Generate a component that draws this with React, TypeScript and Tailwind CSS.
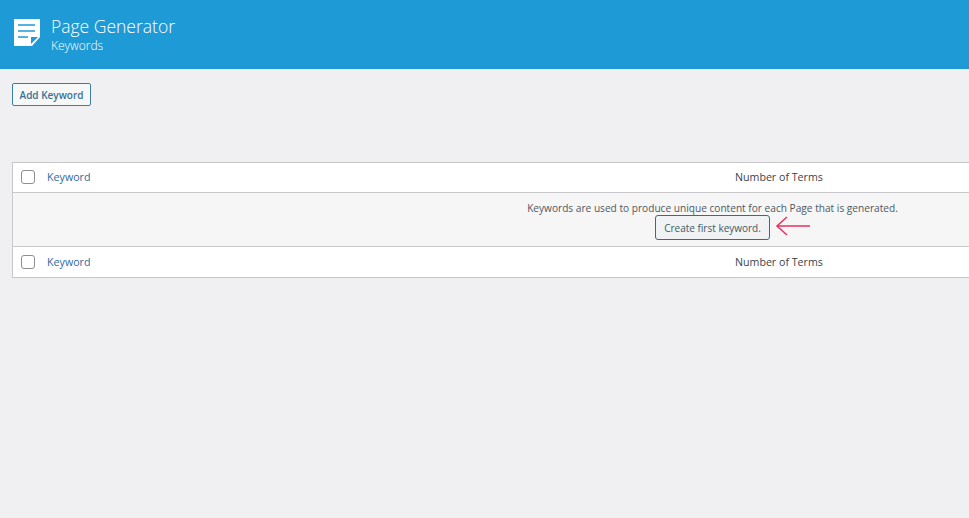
export default function App() {
  const Row = ({ border }: { border: string }) => (
    <div className={`flex items-center bg-white leading-[16px] ${border}`}>
      <div className="flex w-[34px] justify-start pl-[8px]">
        <span className="block h-[14px] w-[14px] rounded-[3px] border border-[#8c8f94] bg-white" />
      </div>
      <div className="w-[688px] text-[10.7px] text-[#2f6aa3]">Keyword</div>
      <div className="text-[10.65px] text-[#3c434a]">Number of Terms</div>
    </div>
  );
  return (
    <div className="h-[518px] w-[969px] overflow-hidden bg-[#f0f0f2] [font-family:'Open_Sans','Noto_Sans',sans-serif]">
      <header className="flex h-[69px] items-start gap-[11px] bg-[#1e9ad6] pl-[14px] pt-[19px] text-white">
        <svg width="26" height="27" viewBox="0 0 26 27" className="shrink-0">
          <path d="M0 0H26V18L18 27H0Z" fill="#fff" />
          <path d="M4 6H21M4 12H21M4 18H14" stroke="#1e9ad6" strokeWidth="1.6" />
          <path d="M17 18H24L17 25Z" fill="#1e9ad6" />
        </svg>
        <div className="-mt-[4px]">
          <div className="text-[17.5px] font-light leading-[22px]">Page Generator</div>
          <div className="mt-[2px] text-[12px] font-light leading-[14px]">Keywords</div>
        </div>
      </header>
      <main className="pl-[12px]">
        <button className="mt-[14px] block h-[23px] w-[79px] rounded-[2px] border border-[#3f7ba3] bg-[#f6f7f7] text-center text-[10px] font-semibold leading-none text-[#3a6f96]">
          Add Keyword
        </button>
        <div className="mt-[56px] w-[1401px] border border-[#c8c8ca]">
          <Row border="h-[30px] pb-[1px] border-b border-[#c8c8ca]" />
          <div className="flex h-[53px] flex-col items-center bg-[#f6f6f7] pt-[8px]">
            <p className="text-[10.15px] leading-[14px] text-[#50575e]">
              Keywords are used to produce unique content for each Page that is generated.
            </p>
            <div className="relative">
              <button className="block h-[25px] w-[115px] rounded-[3px] border border-[#3a6b85] bg-[#f0f2f3] text-center text-[10px] leading-none text-[#3f5a68]">
                Create first keyword.
              </button>
              <svg width="36" height="22" viewBox="0 0 36 22" className="absolute left-[120px] top-0">
                <path d="M35 11H2M12 2L2 11L12 20" fill="none" stroke="#e8325f" strokeWidth="1.5" />
              </svg>
            </div>
          </div>
          <Row border="h-[31px] border-t border-[#c8c8ca]" />
        </div>
      </main>
    </div>
  );
}
